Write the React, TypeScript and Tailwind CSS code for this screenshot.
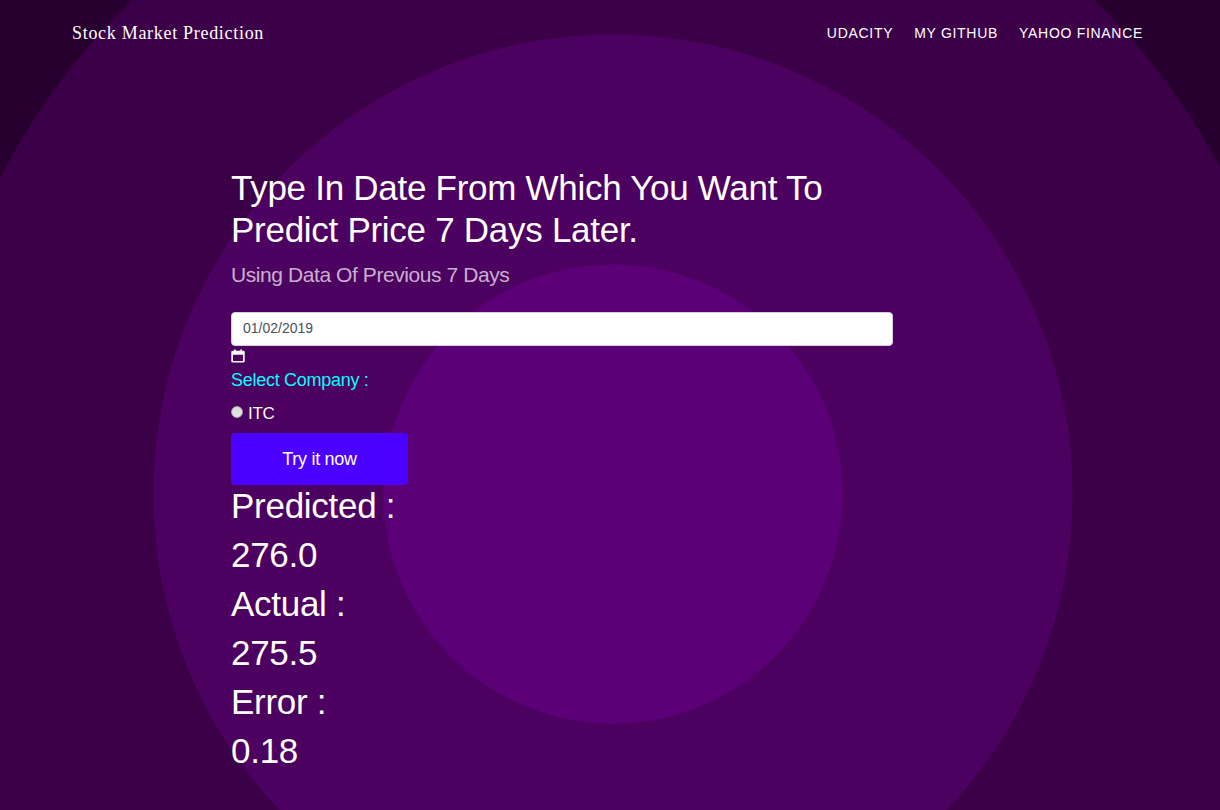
import { useState } from "react";

const links = [
  { label: "UDACITY", href: "#udacity" },
  { label: "MY GITHUB", href: "#github" },
  { label: "YAHOO FINANCE", href: "#yahoo-finance" },
];

const results = [
  { label: "Predicted :", value: "276.0" },
  { label: "Actual :", value: "275.5" },
  { label: "Error :", value: "0.18" },
];

function CalendarIcon() {
  return (
    <svg className="block" width="14" height="14" viewBox="0 0 14 14" aria-hidden="true">
      <path
        fill="#fff"
        fillRule="evenodd"
        d="M1.6 1.8H3V0.5H4.7V1.8H9.3V0.5H11V1.8H12.4Q13.7 1.8 13.7 3.1V12.2Q13.7 13.5 12.4 13.5H1.6Q0.3 13.5 0.3 12.2V3.1Q0.3 1.8 1.6 1.8ZM2 5.8V12H12V5.8Z"
      />
    </svg>
  );
}

export default function App() {
  const [date, setDate] = useState("01/02/2019");
  const [company, setCompany] = useState("");

  return (
    <div className="min-h-screen bg-[radial-gradient(circle_at_calc(50%_+_3px)_494px,#5c0078_229px,#4c0060_230px,#4c0060_459px,#3c0048_460px,#3c0048_689px,#280030_690px)] font-['Liberation_Sans',Arial,sans-serif] tracking-[-0.28px] text-white">
      <nav className="flex items-center justify-between px-[72px] pt-5">
        <a
          href="#top"
          className="font-['Liberation_Serif','Times_New_Roman',serif] text-[18px] leading-[26px] tracking-[0.7px]"
        >
          Stock Market Prediction
        </a>
        <ul className="flex gap-[21px] pr-[5px] text-sm leading-[26px] tracking-[0.7px]">
          {links.map((link) => (
            <li key={link.label}>
              <a href={link.href}>{link.label}</a>
            </li>
          ))}
        </ul>
      </nav>

      <main className="mx-auto w-full max-w-[758px] pt-[121px]">
        <div className="max-w-[662px]">
          <h1 className="text-[35px] leading-[42px]">
            Type In Date From Which You Want To Predict Price 7 Days Later.
          </h1>
          <h2 className="mt-2 text-[21px] leading-8 tracking-[-0.02em] text-white/70">
            Using Data Of Previous 7 Days
          </h2>
          <form onSubmit={(event) => event.preventDefault()}>
            <input
              type="text"
              aria-label="Date"
              value={date}
              onChange={(event) => setDate(event.target.value)}
              className="mt-[21px] block h-[34px] w-full rounded-[4px] border border-[#ced4da] bg-white px-[11px] pb-[2px] text-sm tracking-normal text-[#495057]"
            />
            <div className="mt-[3px]">
              <CalendarIcon />
            </div>
            <fieldset>
              <legend className="pt-1 text-[18px] leading-[26px] text-[#00ffff]">
                Select Company :
              </legend>
              <label className="mt-2 flex items-start gap-[5px] text-[17px] leading-[26px]">
                <input
                  type="radio"
                  name="company"
                  value="ITC"
                  checked={company === "ITC"}
                  onChange={(event) => setCompany(event.target.value)}
                  className="mt-[5px] size-3 appearance-none rounded-full border border-[#a8a8a8] bg-linear-to-b from-[#dcdcdc] to-[#e6e6e6] checked:from-[#555555] checked:to-[#555555]"
                />
                ITC
              </label>
            </fieldset>
            <button
              type="submit"
              className="mt-[6px] block h-[52px] w-[177px] rounded-[4px] bg-[#4c00ff] text-[18px] tracking-[-0.28px]"
            >
              Try it now
            </button>
          </form>
          <dl className="text-[35px] leading-[42px]">
            {results.map((result) => (
              <div key={result.label}>
                <dt className="mb-[7px]">{result.label}</dt>
                <dd className="mb-[7px]">{result.value}</dd>
              </div>
            ))}
          </dl>
        </div>
      </main>
    </div>
  );
}
